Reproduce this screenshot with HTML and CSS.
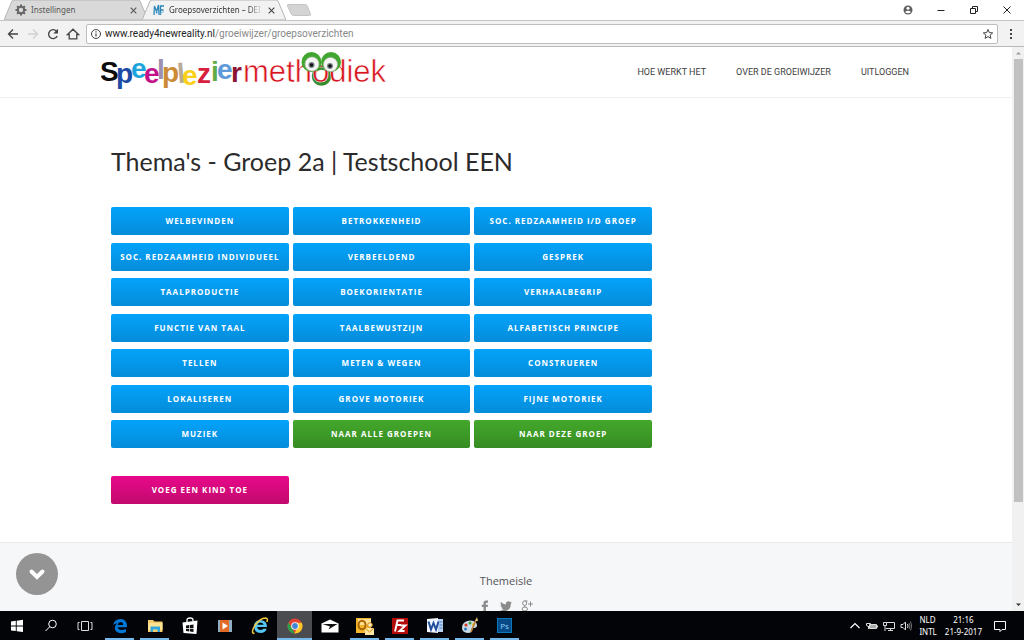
FILE: index.html
```html
<!DOCTYPE html>
<html lang="nl">
<head>
<meta charset="utf-8">
<title>Groepsoverzichten</title>
<link rel="stylesheet" href="styles.css">
</head>
<body>
<div class="screen">
  <header class="titlebar">
    <div class="tabs">
      <div class="tab">
        <svg class="tab-shape" viewBox="0 0 144 20" preserveAspectRatio="none"><path d="M0 20 8 1Q8.500 0 10 0H134Q135.500 0 136 1L144 20Z" fill="#d9d9d9" stroke="#b5b5b5"/></svg>
        <svg class="tab-icon" viewBox="0 0 12 12"><circle cx="6" cy="6" r="3.200" fill="none" stroke="#666" stroke-width="2"/><path d="M6 .5v2M6 9.500v2M.5 6h2M9.500 6h2M2.100 2.100l1.400 1.400M8.500 8.500l1.400 1.400M2.100 9.900l1.400-1.400M8.500 3.500l1.400-1.400" stroke="#666" stroke-width="2"/></svg>
        <span class="tab-title">Instellingen</span>
        <button class="tab-close" aria-label="Tabblad sluiten"><svg viewBox="0 0 8 8"><path d="M1.500 1.500l5 5M6.500 1.500l-5 5" stroke="#555"/></svg></button>
      </div>
      <div class="tab tab-active">
        <svg class="tab-shape" viewBox="0 0 144 20" preserveAspectRatio="none"><path d="M0 20 8 1Q8.500 0 10 0H134Q135.500 0 136 1L144 20Z" fill="#f2f2f2" stroke="#b5b5b5"/></svg>
        <svg class="tab-icon" viewBox="0 0 12 12"><path d="M1 11 1.500 2 3.500 8 5.500 1 6 11M7.500 11V2H11M7.500 6H10.500" fill="none" stroke="#2b84b5" stroke-width="1.300"/><path d="M.5 5 6 10M7 9.500l4-2" stroke="#7dbbdc"/></svg>
        <span class="tab-title tab-title-fade">Groepsoverzichten – DEI</span>
        <button class="tab-close" aria-label="Tabblad sluiten"><svg viewBox="0 0 8 8"><path d="M1.500 1.500l5 5M6.500 1.500l-5 5" stroke="#444"/></svg></button>
      </div>
      <button class="new-tab" aria-label="Nieuw tabblad"><svg viewBox="0 0 26 12"><path d="M2 .5H19Q20.500.5 21 1.500L24.500 10Q25 11.500 23.500 11.500H7.500Q6 11.500 5.500 10.500L1.500 2Q1 .5 2 .5Z" fill="#d4d4d4" stroke="#c4c4c4"/></svg></button>
    </div>
    <div class="window-controls">
      <button aria-label="Profiel"><svg viewBox="0 0 12 12"><circle cx="6" cy="6" r="4.500" fill="#5f5f5f"/><circle cx="6" cy="4.200" r="1.500" fill="#fff"/><path d="M3 8Q6 5.500 9 8 6 10.500 3 8Z" fill="#fff"/></svg></button>
      <button aria-label="Minimaliseren"><svg viewBox="0 0 12 12"><path d="M2.500 6.500h7" stroke="#222"/></svg></button>
      <button aria-label="Verkleinen"><svg viewBox="0 0 12 12"><path d="M2.500 4.500h5v5h-5zM4.500 4V2.500h5v5H8" fill="none" stroke="#222"/></svg></button>
      <button aria-label="Sluiten"><svg viewBox="0 0 12 12"><path d="M2.500 2.500l7 7M9.500 2.500l-7 7" stroke="#222"/></svg></button>
    </div>
  </header>

  <div class="toolbar">
    <button class="tool" aria-label="Terug"><svg viewBox="0 0 14 14"><path d="M12 7H3M7 2.500 2.500 7 7 11.500" fill="none" stroke="#444" stroke-width="1.300"/></svg></button>
    <button class="tool" aria-label="Vooruit"><svg viewBox="0 0 14 14"><path d="M2 7h9M7 2.500 11.500 7 7 11.500" fill="none" stroke="#d0d0d0" stroke-width="1.300"/></svg></button>
    <button class="tool" aria-label="Vernieuwen"><svg viewBox="0 0 14 14"><path d="M10.800 4.500A4.500 4.500 0 1 0 11.200 9" fill="none" stroke="#444" stroke-width="1.400"/><path d="M12 1.800V6.500H7.300Z" fill="#444"/></svg></button>
    <button class="tool" aria-label="Startpagina"><svg viewBox="0 0 14 14"><path d="M1.500 7.500 7 2.200l5.500 5.300H10.800V11.800H3.200V7.500Z" fill="none" stroke="#444" stroke-width="1.300"/></svg></button>
    <div class="address">
      <svg class="address-icon" viewBox="0 0 12 12"><circle cx="6" cy="6" r="4.500" fill="none" stroke="#444"/><path d="M6 5.500V8.500M6 3.300V4.500" stroke="#444" stroke-width="1.200"/></svg>
      <a class="url" href="#"><span class="url-host">www.ready4newreality.nl</span>/groeiwijzer/groepsoverzichten</a>
      <button class="star" aria-label="Bladwijzer"><svg viewBox="0 0 12 12"><path d="M6 1.500 7.300 4.600 10.700 4.900 8.100 7.100 8.900 10.400 6 8.600 3.100 10.400 3.900 7.100 1.300 4.900 4.700 4.600Z" fill="none" stroke="#444"/></svg></button>
    </div>
    <button class="menu" aria-label="Menu"><svg viewBox="0 0 4 12"><path d="M1 1h2v2H1zM1 5h2v2H1zM1 9h2v2H1z" fill="#444"/></svg></button>
  </div>

  <div class="viewport">
    <div class="page">
      <div class="site-header">
        <div class="site-header-inner">
          <a class="logo" href="#">
            <svg viewBox="0 0 286 44" role="img" aria-label="Speelpleziermethodiek">
              <g class="logo-bold">
                <text x="56" y="29" fill="#9c8fb0">l</text>
                <text x="76" y="33" fill="#b9ab94" transform="rotate(-5 80 22)">l</text>
                <text x="-1" y="31" fill="#0c0c0c">S</text>
                <text x="15" y="33" fill="#1c4ba3">p</text>
                <text x="30" y="28" fill="#1ba5dc">e</text>
                <text x="43" y="33" fill="#c4128a">e</text>
                <text x="61" y="32" fill="#cb8a35">p</text>
                <text x="81" y="35" fill="#fbd018">e</text>
                <text x="96" y="33" fill="#d81f3d">z</text>
                <text x="110" y="31" fill="#5fab45">i</text>
                <text x="116" y="29" fill="#5c9ad8">e</text>
                <text x="130" y="32" fill="#8b1434">r</text>
              </g>
              <circle cx="220.500" cy="26" r="8" fill="none" stroke="#368c2f" stroke-width="3.500"/>
              <text class="logo-light" x="142" y="32">methodiek</text>
              <circle cx="210.500" cy="12" r="10" fill="#41a62f"/><circle cx="230" cy="12" r="10" fill="#41a62f"/>
              <circle cx="211" cy="14" r="7" fill="#f5f5f3" stroke="#b5b8b2" stroke-width=".6"/><circle cx="229.500" cy="14.500" r="7" fill="#f5f5f3" stroke="#b5b8b2" stroke-width=".6"/>
              <circle cx="210.500" cy="15" r="3" fill="#78848a"/><circle cx="229" cy="16" r="3" fill="#78848a"/>
              <circle cx="210.500" cy="15" r="1.800" fill="#111"/><circle cx="229" cy="16" r="1.800" fill="#111"/>
            </svg>
          </a>
          <nav class="site-nav">
            <a href="#">HOE WERKT HET</a>
            <a href="#">OVER DE GROEIWIJZER</a>
            <a href="#">UITLOGGEN</a>
          </nav>
        </div>
      </div>

      <main class="content">
        <h1>Thema's - Groep 2a | Testschool EEN</h1>
        <div class="themes">
          <button class="btn">WELBEVINDEN</button>
          <button class="btn">BETROKKENHEID</button>
          <button class="btn">SOC. REDZAAMHEID I/D GROEP</button>
          <button class="btn">SOC. REDZAAMHEID INDIVIDUEEL</button>
          <button class="btn">VERBEELDEND</button>
          <button class="btn">GESPREK</button>
          <button class="btn">TAALPRODUCTIE</button>
          <button class="btn">BOEKORIENTATIE</button>
          <button class="btn">VERHAALBEGRIP</button>
          <button class="btn">FUNCTIE VAN TAAL</button>
          <button class="btn">TAALBEWUSTZIJN</button>
          <button class="btn">ALFABETISCH PRINCIPE</button>
          <button class="btn">TELLEN</button>
          <button class="btn">METEN &amp; WEGEN</button>
          <button class="btn">CONSTRUEREN</button>
          <button class="btn">LOKALISEREN</button>
          <button class="btn">GROVE MOTORIEK</button>
          <button class="btn">FIJNE MOTORIEK</button>
          <button class="btn">MUZIEK</button>
          <button class="btn btn-green">NAAR ALLE GROEPEN</button>
          <button class="btn btn-green">NAAR DEZE GROEP</button>
        </div>
        <div class="add-row">
          <button class="btn btn-pink">VOEG EEN KIND TOE</button>
        </div>
      </main>

      <footer class="site-footer">
        <a class="credit" href="#">Themeisle</a>
        <div class="social">
          <a href="#" aria-label="Facebook"><svg viewBox="0 0 12 12"><path d="M4.500 12V7H2.800V4.800H4.500V3.200Q4.500.6 7 .6H9V2.700H7.800Q6.900 2.700 6.900 3.500V4.800H9L8.700 7H6.900V12Z" fill="#8b8b8b"/></svg></a>
          <a href="#" aria-label="Twitter"><svg viewBox="0 0 12 12"><path d="M12 2.600 10.800 3.700Q10.800 10.800 4 11.300 1.700 11.300.2 10.200 2.200 10.300 3.700 9.200 1.900 9 1.400 7.400H2.500Q.6 6.700.5 4.900L1.600 5.200Q-.1 3.700.9 1.900 3 4.300 5.900 4.400 5.500 1.400 8.300 1.200 9.300 1.200 10 1.900L11.500 1.400 10.600 2.800Z" fill="#8b8b8b"/></svg></a>
          <a href="#" aria-label="Google Plus"><svg viewBox="0 0 12 12"><g fill="none" stroke="#8b8b8b"><ellipse cx="3.700" cy="3.200" rx="2" ry="2.300"/><path d="M3.500 1H6.500M4 5.500Q3 6.200 4.500 7.200"/><ellipse cx="3.800" cy="9" rx="2.700" ry="2"/><path d="M9.500 1.500v5M7 4h5"/></g></svg></a>
        </div>
      </footer>
      <button class="scroll-down" aria-label="Naar beneden"><svg viewBox="0 0 42 42"><path d="M15.500 18.500 21 24l5.500-5.500" fill="none" stroke="#fff" stroke-width="4" stroke-linecap="round"/></svg></button>
    </div>
    <div class="scrollbar">
      <svg class="arrow" viewBox="0 0 12 12"><path d="M4 7.500h5L6.500 5Z" fill="#999"/></svg>
      <div class="track"><div class="thumb"></div></div>
      <svg class="arrow" viewBox="0 0 12 12"><path d="M4 4.500h5L6.500 7Z" fill="#333"/></svg>
    </div>
  </div>

  <div class="taskbar">
    <div class="system">
      <button aria-label="Start"><svg viewBox="0 0 18 18"><path d="M3 4.500 7.800 3.800V8.500H3ZM8.700 3.700 15 2.800V8.500H8.700ZM3 9.400H7.800V14.100L3 13.400ZM8.700 9.400H15V15L8.700 14.200Z" fill="#fff"/></svg></button>
      <button aria-label="Zoeken"><svg viewBox="0 0 18 18"><circle cx="10.500" cy="7" r="3.800" fill="none" stroke="#fff"/><path d="M7.700 9.800 3.500 14" stroke="#fff"/></svg></button>
      <button aria-label="Taakweergave"><svg viewBox="0 0 18 18"><path d="M5.500 4.500h7v9h-7zM3.500 5.500h-1.500v7h1.500M14.500 5.500H16v7h-1.500" fill="none" stroke="#ddd"/></svg></button>
    </div>
    <div class="apps">
      <button class="open" aria-label="Edge"><svg viewBox="0 0 18 18"><path d="M2 8Q3.500 2 9.500 2 16 2.300 16 9V10.300H6.700Q7.200 13 10.500 13 13 13 15 11.900V15Q13 16.300 10 16.300 4 16 3.800 10.800 4 7.600 6.500 6.200 4 6.200 2 8ZM6.700 7.900H12.200Q12 5.200 9.500 5.100 7.200 5.200 6.700 7.900Z" fill="#0078d7" fill-rule="evenodd"/></svg></button>
      <button class="open" aria-label="Verkenner"><svg viewBox="0 0 18 18"><path d="M2 3H7L8.500 4.500H16.500V15H2Z" fill="#f5cc68"/><path d="M2 6H16.500V13H2Z" fill="#ffe393"/><path d="M4.500 9.500H14V15H11.500V12.500H7V15H4.500Z" fill="#31a7dc"/></svg></button>
      <button aria-label="Store"><svg viewBox="0 0 18 18"><path d="M1.500 5.500 16.500 3.500 15.500 17 2.500 16Z" fill="#fff"/><path d="M6 5V3Q6 1 9 1T12 3V4.500" fill="none" stroke="#fff" stroke-width="1.300"/><path d="M5 8.500 8.300 8V11H5ZM9 8 12.500 7.500V11H9ZM5 11.700H8.300V14.500L5 14ZM9 11.700H12.500V15L9 14.600Z" fill="#111"/></svg></button>
      <button aria-label="Mediaspeler"><svg viewBox="0 0 18 18"><path d="M2 3H16V15H2Z" fill="#8faec2"/><path d="M4 3H13V15H4Z" fill="#e36a25"/><path d="M6.500 5.500 12 9 6.500 12.500Z" fill="#fff"/></svg></button>
      <button aria-label="Internet Explorer"><svg viewBox="0 0 18 18"><path d="M16 10H6.200Q6.500 13 9.500 13 11.500 13 12.300 11.700H15.700Q14.300 16 9.500 16 3 15.500 3 9.500 3.300 3.300 9.500 3 16 3.500 16 10ZM6.300 7.800H12.700Q12.200 5.700 9.500 5.500 6.800 5.700 6.300 7.800Z" fill="#55c5f2" fill-rule="evenodd"/><path d="M3.500 16.500Q-.5 16 3.500 9 9 1 14.500 1 17.500 1.300 15.800 5" fill="none" stroke="#f4c83c" stroke-width="1.500"/></svg></button>
      <button class="open current" aria-label="Chrome"><svg viewBox="0 0 18 18"><circle cx="9" cy="9" r="7.500" fill="#e24335"/><path d="M2.500 5.300 9 16.500A7.500 7.500 0 0 1 2.500 5.300Z" fill="#2da04b"/><path d="M15.700 5.700A7.500 7.500 0 0 1 8.500 16.500L12 9 10 5.700Z" fill="#fbc927"/><circle cx="9" cy="9" r="3.800" fill="#fff"/><circle cx="9" cy="9" r="2.900" fill="#4285d4"/></svg></button>
      <button aria-label="Mail"><svg viewBox="0 0 18 18"><path d="M.5 6.500 9 2.500 17.500 6.500V15.500H.5Z" fill="#fff"/><path d="M1.500 7H16.500L7.500 12.500 9 9.500Z" fill="#111"/></svg></button>
      <button class="open" aria-label="Outlook"><svg viewBox="0 0 18 18"><path d="M0 1H15V16H0Z" fill="#f3b62d"/><path d="M2 2H15V8H2Z" fill="#ffe093"/><ellipse cx="6" cy="8" rx="3.500" ry="4.300" fill="none" stroke="#a86500" stroke-width="2"/><path d="M9 11H18V18H9Z" fill="#ffe7a3"/><path d="M9 11 13.500 15 18 11" fill="none" stroke="#d38612"/><circle cx="14" cy="8" r="2.300" fill="#fff0c5" stroke="#d38612"/></svg></button>
      <button class="open" aria-label="FileZilla"><svg viewBox="0 0 18 18"><path d="M1 1H17V17H1Z" fill="#b40b0b"/><path d="M4 14.500 6.500 3.500H13M5 8H10M9.500 8.500H14.500L8.500 14H13.500" fill="none" stroke="#fff" stroke-width="1.900"/></svg></button>
      <button class="open" aria-label="Word"><svg viewBox="0 0 18 18"><path d="M1 2 12 1V16L1 15Z" fill="#f2f7ff"/><path d="M12 2H17V15H12Z" fill="#b9d2f0"/><path d="M2.500 4.500 5 12.500 7.500 6 10 12.500 12.500 4.500" fill="none" stroke="#204e9c" stroke-width="2"/><path d="M13.500 5h3M13.500 8h3M13.500 11h3" stroke="#4c7fc4"/></svg></button>
      <button class="open" aria-label="Paint"><svg viewBox="0 0 18 18"><path d="M1 11Q1 4 9 3.500 16.500 4 16 9 15.500 11 12 11 10 11 11 13.500 10.500 16 7 16 1 15.500 1 11Z" fill="#c9dbe5"/><circle cx="5" cy="8" r="1.600" fill="#d8382c"/><circle cx="9" cy="6" r="1.500" fill="#3c9c3b"/><circle cx="4.500" cy="12" r="1.500" fill="#2c7ac3"/><circle cx="12.500" cy="7.500" r="1.500" fill="#efbd2b"/><path d="M10 15 15 3" stroke="#be7d34" stroke-width="1.600"/><path d="M14 4 16 0 17 4Z" fill="#e9c98e"/></svg></button>
      <button class="open photoshop" aria-label="Photoshop"><span>Ps</span></button>
    </div>
    <div class="tray">
      <svg viewBox="0 0 12 12"><path d="M1.500 8 6 3.500 10.500 8" fill="none" stroke="#fff" stroke-width="1.200"/></svg>
      <svg viewBox="0 0 12 12"><path d="M3.500 4.500H10.500V8.500H3.500Z" fill="#aaa" stroke="#ddd"/><path d="M11.500 5.500v2M.5 3.500h4v2q-2 2-4 0zM2.500 6v3" fill="none" stroke="#ddd"/></svg>
      <svg viewBox="0 0 12 12"><path d="M3.500 2.500H11.500V8.500H3M7.500 8.500V11M5 10.500h5M.5 2.500h3v3h-3zM2 6v5" fill="none" stroke="#ddd"/></svg>
      <svg viewBox="0 0 12 12"><path d="M1 4.500H3L5.500 2V10L3 7.500H1Z" fill="none" stroke="#ddd"/><path d="M7.500 4Q8.500 6 7.500 8" fill="none" stroke="#ddd"/><path d="M9 3Q11 6 9 9M10.500 1.500Q13 6 10.500 10.500" fill="none" stroke="#777"/></svg>
    </div>
    <div class="language"><span>NLD</span><span>INTL</span></div>
    <div class="clock"><span>21:16</span><span>21-9-2017</span></div>
    <button class="notifications" aria-label="Meldingen"><svg viewBox="0 0 14 14"><path d="M1.500 2.500h11v8H9L7 12.500V10.500H1.500Z" fill="none" stroke="#fff"/></svg></button>
  </div>
</div>
</body>
</html>
```
FILE: styles.css
```css
* { box-sizing: border-box; }
body { margin: 0; font-family: "Open Sans", "Noto Sans", sans-serif; color: #222; }
button { border: 0; padding: 0; background: none; font-family: inherit; }
a { color: inherit; text-decoration: none; }
svg { display: block; }

.screen { display: grid; grid-template-rows: 20px 27px minmax(0, 1fr) 29px; height: 100vh; overflow: hidden; }

/* Browser window */
.titlebar { display: flex; justify-content: space-between; background: #fff; }
.tabs { display: flex; align-items: center; padding-left: 4px; }
.tab { position: relative; display: flex; align-items: center; gap: 4px; width: 144px; height: 20px; padding: 0 10px 0 11px; margin-right: -6px; font: 8px/12px "Noto Sans", sans-serif; color: #555; }
.tab-active { z-index: 1; color: #333; }
.tab-shape { position: absolute; inset: 0; width: 100%; height: 100%; }
.tab-icon { position: relative; width: 12px; height: 12px; }
.tab-title { position: relative; flex: 1; white-space: nowrap; }
.tab-title-fade { mask-image: linear-gradient(to right, #000 84%, transparent); }
.tab-close { position: relative; width: 9px; height: 9px; }
.new-tab { width: 26px; margin-left: 6px; }
.window-controls { display: flex; align-items: center; padding-right: 11px; gap: 21px; }
.window-controls button { width: 12px; height: 12px; }

.toolbar { display: flex; align-items: center; gap: 6px; padding: 0 11px 0 6px; background: #f2f2f2; border-top: 1px solid #c6c6c6; border-bottom: 1px solid #b8b8b8; }
.tool { width: 14px; height: 14px; }
.address { display: flex; flex: 1; align-items: center; gap: 3px; height: 20px; padding: 0 3px; background: #fff; border: 1px solid #bdbdbd; border-radius: 2px; }
.address-icon { width: 12px; height: 12px; }
.url { flex: 1; font: 10px/14px Roboto, sans-serif; color: #888; }
.url-host { color: #222; }
.star { width: 12px; height: 12px; }
.menu { width: 4px; margin-left: 5px; }

.viewport { display: grid; grid-template-columns: minmax(0, 1fr) 12px; min-height: 0; background: #fff; }
.page { position: relative; display: flex; flex-direction: column; overflow: hidden; }
.scrollbar { display: flex; flex-direction: column; background: #f1f1f1; }
.arrow { width: 12px; height: 12px; }
.track { flex: 1; padding: 0 1px 0 2px; }
.thumb { height: 82%; background: #c1c1c1; }

/* Site header */
.site-header { border-bottom: 1px solid #f1f1f1; }
.site-header-inner { display: flex; align-items: center; justify-content: space-between; max-width: 810px; height: 50px; margin: 0 auto; }
.logo svg { width: 286px; height: 44px; }
.logo-bold { font: bold 28px "Liberation Sans", Arial, sans-serif; }
.logo-light { font: 31px "Liberation Sans", Arial, sans-serif; fill: #d81420; stroke: #fff; stroke-width: 0.5; }
.site-nav { display: flex; gap: 30px; padding-right: 2px; font: 9px/14px Roboto, sans-serif; color: #404040; }

/* Theme overview */
.content { width: 790px; max-width: 100%; margin: 0 auto; padding: 45px 0 38px; }
h1 { margin: 0 0 28px; font: 25px/36px Lato, sans-serif; color: #2b2b2b; }
.themes { display: grid; grid-template-columns: repeat(3, 1fr); gap: 0 4px; align-content: space-between; max-width: 541px; min-height: 241px; }
.add-row { display: grid; grid-template-columns: repeat(3, 1fr); gap: 4px; max-width: 541px; margin-top: 28px; }
.btn { height: 28px; border-radius: 2px; background: linear-gradient(#03a3fb, #058cd9); color: #fff; font-size: 8px; font-weight: 700; line-height: 12px; letter-spacing: 1px; white-space: nowrap; }
.btn-green { background: linear-gradient(#43a82b, #378c23); }
.btn-pink { background: linear-gradient(#e8088a, #c20a6e); }

.site-footer { display: flex; flex: 1; flex-direction: column; align-items: center; gap: 11px; padding-top: 30px; background: #f6f7f9; border-top: 1px solid #e9eaec; }
.credit { font-size: 11px; line-height: 16px; color: #555; }
.social { display: flex; gap: 9px; }
.social svg { width: 12px; height: 12px; }
.scroll-down { position: absolute; left: 16px; bottom: 16px; width: 42px; height: 42px; border-radius: 50%; background: #949494; }

/* Taskbar */
.taskbar { display: flex; background: #020407; color: #fff; }
.system, .apps { display: flex; }
.system button { display: grid; place-items: center; width: 34px; }
.apps button { display: grid; place-items: center; width: 35px; padding: 2px 0; border: solid transparent; border-width: 0 3px; }
.system svg, .apps svg { width: 18px; height: 18px; }
.apps .open { background: linear-gradient(#76b9ed, #76b9ed) bottom / 100% 2px no-repeat padding-box; }
.apps .current { border-width: 0; background-color: #4a4c4f; }
.photoshop span { display: grid; place-items: center; width: 15px; height: 15px; background: #064a86; border: 1px solid #0878bf; color: #8fd3ff; font-size: 8px; line-height: 12px; }
.tray { display: flex; align-items: center; gap: 5px; margin-left: auto; }
.tray svg { width: 12px; height: 12px; }
.language, .clock { display: flex; flex-direction: column; justify-content: center; font: 8px/12px "Noto Sans", sans-serif; }
.language { margin-left: 7px; }
.clock { align-items: center; margin-left: 8px; }
.notifications { width: 14px; margin: 0 17px 0 11px; }
```
